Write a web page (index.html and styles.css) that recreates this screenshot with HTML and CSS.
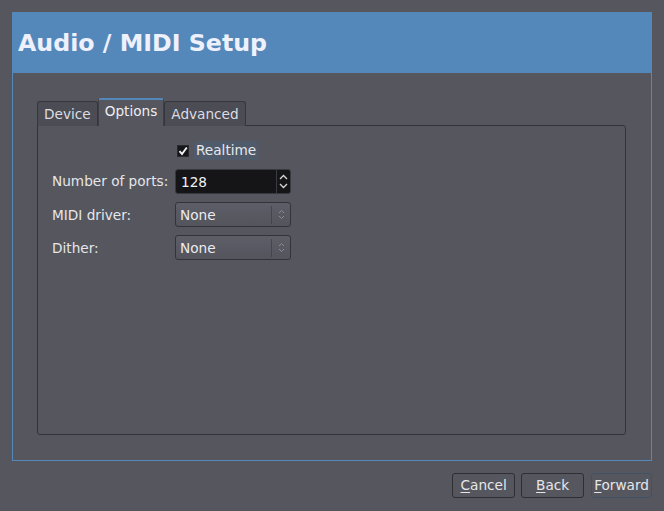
FILE: index.html
```html
<!DOCTYPE html>
<html>
<head>
<meta charset="utf-8">
<link rel="stylesheet" href="styles.css">
</head>
<body>
<div class="dialog">
  <div class="header"><h1 class="title">Audio / MIDI Setup</h1></div>
  <div class="frame">
    <div class="notebook">
      <div class="tabs">
        <div class="tab">Device</div>
        <div class="tab active">Options</div>
        <div class="tab">Advanced</div>
      </div>
      <div class="pane">
        <div class="form">
          <div></div>
          <div class="check-row">
            <span class="checkbox"><svg width="10" height="10" viewBox="0 0 10 10"><path d="M1.5 5.2 L4 8 L8.8 1.5" fill="none" stroke="#f2f2f2" stroke-width="1.9"/></svg></span>
            <span class="check-label">Realtime</span>
          </div>
          <div class="label">Number of ports:</div>
          <div class="spin">
            <span class="spin-value">128</span>
            <span class="spin-btns">
              <svg width="9" height="6" viewBox="0 0 9 6"><path d="M1 5 L4.5 1.5 L8 5" fill="none" stroke="#d8d8d8" stroke-width="1.3"/></svg>
              <svg width="9" height="6" viewBox="0 0 9 6"><path d="M1 1 L4.5 4.5 L8 1" fill="none" stroke="#d8d8d8" stroke-width="1.3"/></svg>
            </span>
          </div>
          <div class="label">MIDI driver:</div>
          <div class="combo">
            <span class="combo-value">None</span>
            <span class="combo-arrows"><svg width="7" height="11" viewBox="0 0 7 11"><path d="M1 4 L3.5 1.5 L6 4 M1 7 L3.5 9.5 L6 7" fill="none" stroke="#8a8b92" stroke-width="1"/></svg></span>
          </div>
          <div class="label">Dither:</div>
          <div class="combo">
            <span class="combo-value">None</span>
            <span class="combo-arrows"><svg width="7" height="11" viewBox="0 0 7 11"><path d="M1 4 L3.5 1.5 L6 4 M1 7 L3.5 9.5 L6 7" fill="none" stroke="#8a8b92" stroke-width="1"/></svg></span>
          </div>
        </div>
      </div>
    </div>
  </div>
  <div class="buttons">
    <div class="btn"><u>C</u>ancel</div>
    <div class="btn"><u>B</u>ack</div>
    <div class="btn focus"><u>F</u>orward</div>
  </div>
</div>
</body>
</html>
```
FILE: styles.css
```css
html, body {
  margin: 0;
  padding: 0;
  background: #55565e;
}
body {
  font-family: "DejaVu Sans", sans-serif;
  font-size: 13.65px;
  color: #e8e8ec;
  width: 664px;
  height: 511px;
  overflow: hidden;
}
.dialog {
  padding: 12px 12px 0 12px;
}
.header {
  background: #5488bb;
  height: 61px;
  display: flex;
  align-items: center;
  padding-left: 6px;
}
.title {
  margin: 0;
  font-size: 23.7px;
  font-weight: bold;
  color: #eef0fc;
}
.frame {
  border: 1px solid #5488bb;
  border-top: none;
  height: 388px;
  box-sizing: border-box;
  padding: 25px 25px 25px 24px;
  display: flex;
  flex-direction: column;
}
.notebook {
  flex: 1;
  display: flex;
  flex-direction: column;
}
.tabs {
  display: flex;
  align-items: flex-end;
  height: 28px;
  margin-bottom: -1px;
  position: relative;
  z-index: 1;
}
.tab {
  height: 25px;
  box-sizing: border-box;
  border: 1px solid #36373d;
  border-bottom: none;
  border-radius: 3px 3px 0 0;
  background: #4b4c54;
  padding: 0 6px;
  line-height: 25px;
  color: #dcdce2;
}
.tab.active {
  height: 28px;
  background: #55565e;
  border-color: #3e3f46;
  border-top: 2px solid #5488bb;
  line-height: 23px;
  color: #eeeef2;
  padding: 0 6px;
}
.pane {
  flex: 1;
  border: 1px solid #33343a;
  border-radius: 0 3px 3px 3px;
  background: #55565e;
  padding: 15px 14px 14px;
}
.form {
  display: grid;
  grid-template-columns: 123px 116px;
  row-gap: 8px;
  align-items: center;
}
.form > :first-child { height: 19px; }
.check-row {
  display: flex;
  align-items: center;
  height: 19px;
  margin-left: 2px;
}
.checkbox {
  width: 12px;
  height: 12px;
  background: #16161a;
  border: 1px solid #2a2a2e;
  display: flex;
  align-items: center;
  justify-content: center;
  box-sizing: border-box;
  margin-right: 5px;
}
.check-label {
  background: #4f5b6b;
  border-radius: 2px;
  padding: 0 2px;
  line-height: 19px;
}
.label {
  white-space: nowrap;
  color: #e6e6ea;
}
.spin {
  height: 25px;
  box-sizing: border-box;
  background: #151517;
  border: 1px solid #38393f;
  border-radius: 3px;
  display: flex;
  align-items: center;
  margin-top: 1px;
}
.spin-value {
  flex: 1;
  padding-left: 5px;
  color: #f2f2f4;
}
.spin-btns {
  width: 14px;
  height: 100%;
  border-left: 1px solid #3c3d44;
  display: flex;
  flex-direction: column;
  align-items: center;
  justify-content: space-around;
  padding: 2px 0;
  box-sizing: border-box;
}
.combo {
  height: 25px;
  box-sizing: border-box;
  background: linear-gradient(#5d5e67, #53545c);
  border: 1px solid #33343a;
  border-radius: 3px;
  display: flex;
  align-items: center;
}
.combo-value {
  flex: 1;
  padding-left: 4px;
  color: #ececf0;
}
.combo-arrows {
  width: 18px;
  height: 18px;
  border-left: 1px solid #45464d;
  display: flex;
  align-items: center;
  justify-content: center;
}
.buttons {
  display: flex;
  justify-content: flex-end;
  gap: 6px;
  margin-top: 12px;
}
.btn {
  height: 25px;
  min-width: 63px;
  text-align: center;
  box-sizing: border-box;
  border: 1px solid #2e2f34;
  border-radius: 3px;
  background: #55565e;
  line-height: 23px;
  padding: 0 6px;
  color: #e6e6ea;
}
.btn.focus {
  min-width: 0;
  border-color: #3f5266;
  padding: 0 2px;
  margin-left: 1px;
}
.btn u {
  text-decoration: underline;
  text-underline-offset: 2px;
}
```
